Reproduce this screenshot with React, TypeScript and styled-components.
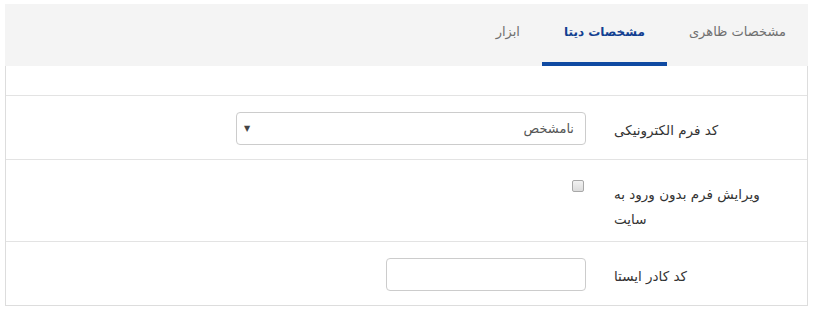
import * as React from "react";
import styled, { createGlobalStyle } from "styled-components";

const GlobalStyle = createGlobalStyle`
    html, body {
        margin: 0;
        padding: 0;
        background: #ffffff;
    }
    body {
        font-family: "DejaVu Sans", sans-serif;
        font-size: 13px;
        color: #333333;
    }
`;

const Card = styled.div`
    direction: rtl;
    margin: 4px 6px 0 5px;
`;

const TabBar = styled.div`
    display: flex;
    height: 62px;
    background: #f4f4f4;
`;

const Tab = styled.div<{ $active?: boolean }>`
    display: flex;
    align-items: center;
    padding: 1px 22px 4px;
    margin-bottom: -4px;
    height: 62px;
    box-sizing: border-box;
    font-size: ${(p) => (p.$active ? "12px" : "13px")};
    color: ${(p) => (p.$active ? "#123f91" : "#6f6f6f")};
    font-weight: ${(p) => (p.$active ? "bold" : "normal")};
    border-bottom: 4px solid ${(p) => (p.$active ? "#0f4aa2" : "transparent")};
    cursor: pointer;
`;

const Panel = styled.div`
    border: 1px solid #dddddd;
    border-top: none;
    background: #ffffff;
`;

const Spacer = styled.div`
    height: 29px;
`;

const Row = styled.div<{ $tall?: boolean }>`
    display: flex;
    align-items: flex-start;
    gap: 28px;
    padding: 16px 38px ${(p) => (p.$tall ? "9px" : "8px")} 0;
    border-top: 1px solid #e3e3e3;
`;

const Label = styled.div`
    width: 155px;
    flex-shrink: 0;
    text-align: left;
    padding-top: 6px;
    line-height: 25px;
    font-size: 13.5px;
    color: #333333;
`;

const Control = styled.div`
    min-height: 39px;
    flex: 1;
    display: flex;
`;

const Select = styled.div`
    width: 350px;
    height: 33px;
    box-sizing: border-box;
    border: 1px solid #cccccc;
    border-radius: 4px;
    display: flex;
    align-items: center;
    justify-content: space-between;
    padding: 0 11px 0 7px;
    color: #555555;
    font-size: 13px;
`;

const Arrow = styled.span`
    font-size: 8px;
    color: #444444;
`;

const Check = styled.input.attrs({ type: "checkbox" })`
    appearance: none;
    width: 12px;
    height: 12px;
    margin: 4px 2px 0 0;
    border: 1px solid #a8a8a8;
    border-radius: 2px;
    background: linear-gradient(#f2f2f2, #dcdcdc);
    box-sizing: border-box;
`;

const TextInput = styled.input`
    width: 200px;
    height: 33px;
    box-sizing: border-box;
    border: 1px solid #cccccc;
    border-radius: 4px;
    margin: 0;
    padding: 0 10px;
    font-family: inherit;
    font-size: 13px;
`;

export default function App() {
    return (
        <>
            <GlobalStyle />
            <Card>
                <TabBar>
                    <Tab>مشخصات ظاهری</Tab>
                    <Tab $active>مشخصات دیتا</Tab>
                    <Tab>ابزار</Tab>
                </TabBar>
                <Panel>
                    <Spacer />
                    <Row>
                        <Label>کد فرم الکترونیکی</Label>
                        <Control>
                            <Select>
                                <span>نامشخص</span>
                                <Arrow>▼</Arrow>
                            </Select>
                        </Control>
                    </Row>
                    <Row $tall>
                        <Label>ویرایش فرم بدون ورود به سایت</Label>
                        <Control>
                            <Check />
                        </Control>
                    </Row>
                    <Row>
                        <Label>کد کادر ایستا</Label>
                        <Control>
                            <TextInput />
                        </Control>
                    </Row>
                </Panel>
            </Card>
        </>
    );
}
